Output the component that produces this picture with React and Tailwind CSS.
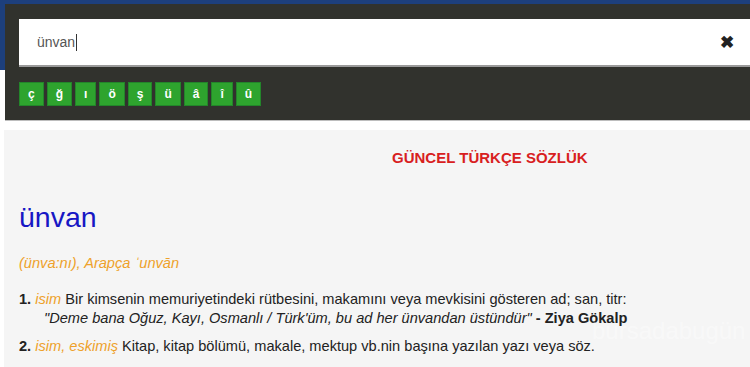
import React from 'react';

const letters = ['ç', 'ğ', 'ı', 'ö', 'ş', 'ü', 'â', 'î', 'û'];

const App = () => {
  return (
    <div className="relative w-[750px] h-[367px] overflow-hidden bg-white" style={{ fontFamily: '"Liberation Sans", Arial, sans-serif' }}>
      {/* Üst mavi şerit */}
      <div className="absolute left-0 top-0 w-full h-[70px] bg-[#1d3f7c]" />

      {/* Arama paneli */}
      <div className="relative ml-[5px] mt-[4px] h-[117px] bg-[#31322d] pt-[15px] pl-[14px] border-b border-[#bdbdbd]">
        <div className="flex items-center h-[48px] bg-white border-b-2 border-[#9a9a9a] pl-[18px] pr-[16px]">
          <span className="text-[14px] text-[#555]">ünvan</span>
          <span className="w-px h-[17px] bg-[#333] ml-px" />
          <span className="ml-auto text-[17px] font-bold text-[#222] leading-none">✖</span>
        </div>
        <div className="flex gap-[3px] mt-[15px]">
          {letters.map((l) => (
            <button
              key={l}
              className="h-[24px] px-[8px] bg-[#2ea42e] border border-[#23862a] text-white text-[12px] font-bold leading-none"
            >
              {l}
            </button>
          ))}
        </div>
      </div>

      {/* Sözlük içeriği */}
      <div className="ml-[4px] mt-[9px] bg-[#f5f5f5] h-[240px] pl-[15px] pt-[17px]">
        <div className="pl-[373px] text-[15px] font-bold text-[#d8201e]">
          GÜNCEL TÜRKÇE SÖZLÜK
        </div>
        <h1 className="mt-[30px] text-[28.5px] leading-[34px] text-[#1717c4]">ünvan</h1>
        <div className="mt-[19px] text-[14.6px] italic text-[#eea12a]">(ünva:nı), Arapça ˈunvān</div>
        <div className="mt-[16px] text-[14.6px] text-[#222] leading-[19px]">
          <div>
            <b>1.</b> <i className="text-[#eea12a]">isim</i> Bir kimsenin memuriyetindeki rütbesini, makamını veya mevkisini gösteren ad; san, titr:
          </div>
          <div className="pl-[25px]">
            <i>"Deme bana Oğuz, Kayı, Osmanlı / Türk'üm, bu ad her ünvandan üstündür"</i> <b>- Ziya Gökalp</b>
          </div>
          <div className="mt-[9px]">
            <b>2.</b> <i className="text-[#eea12a]">isim, eskimiş</i> Kitap, kitap bölümü, makale, mektup vb.nin başına yazılan yazı veya söz.
          </div>
        </div>
      </div>

      {/* Filigran */}
      <div className="absolute left-[592px] top-[313px] text-[24px] text-white/40 pointer-events-none">
        bursadabugün
      </div>
    </div>
  );
};

export default App;
